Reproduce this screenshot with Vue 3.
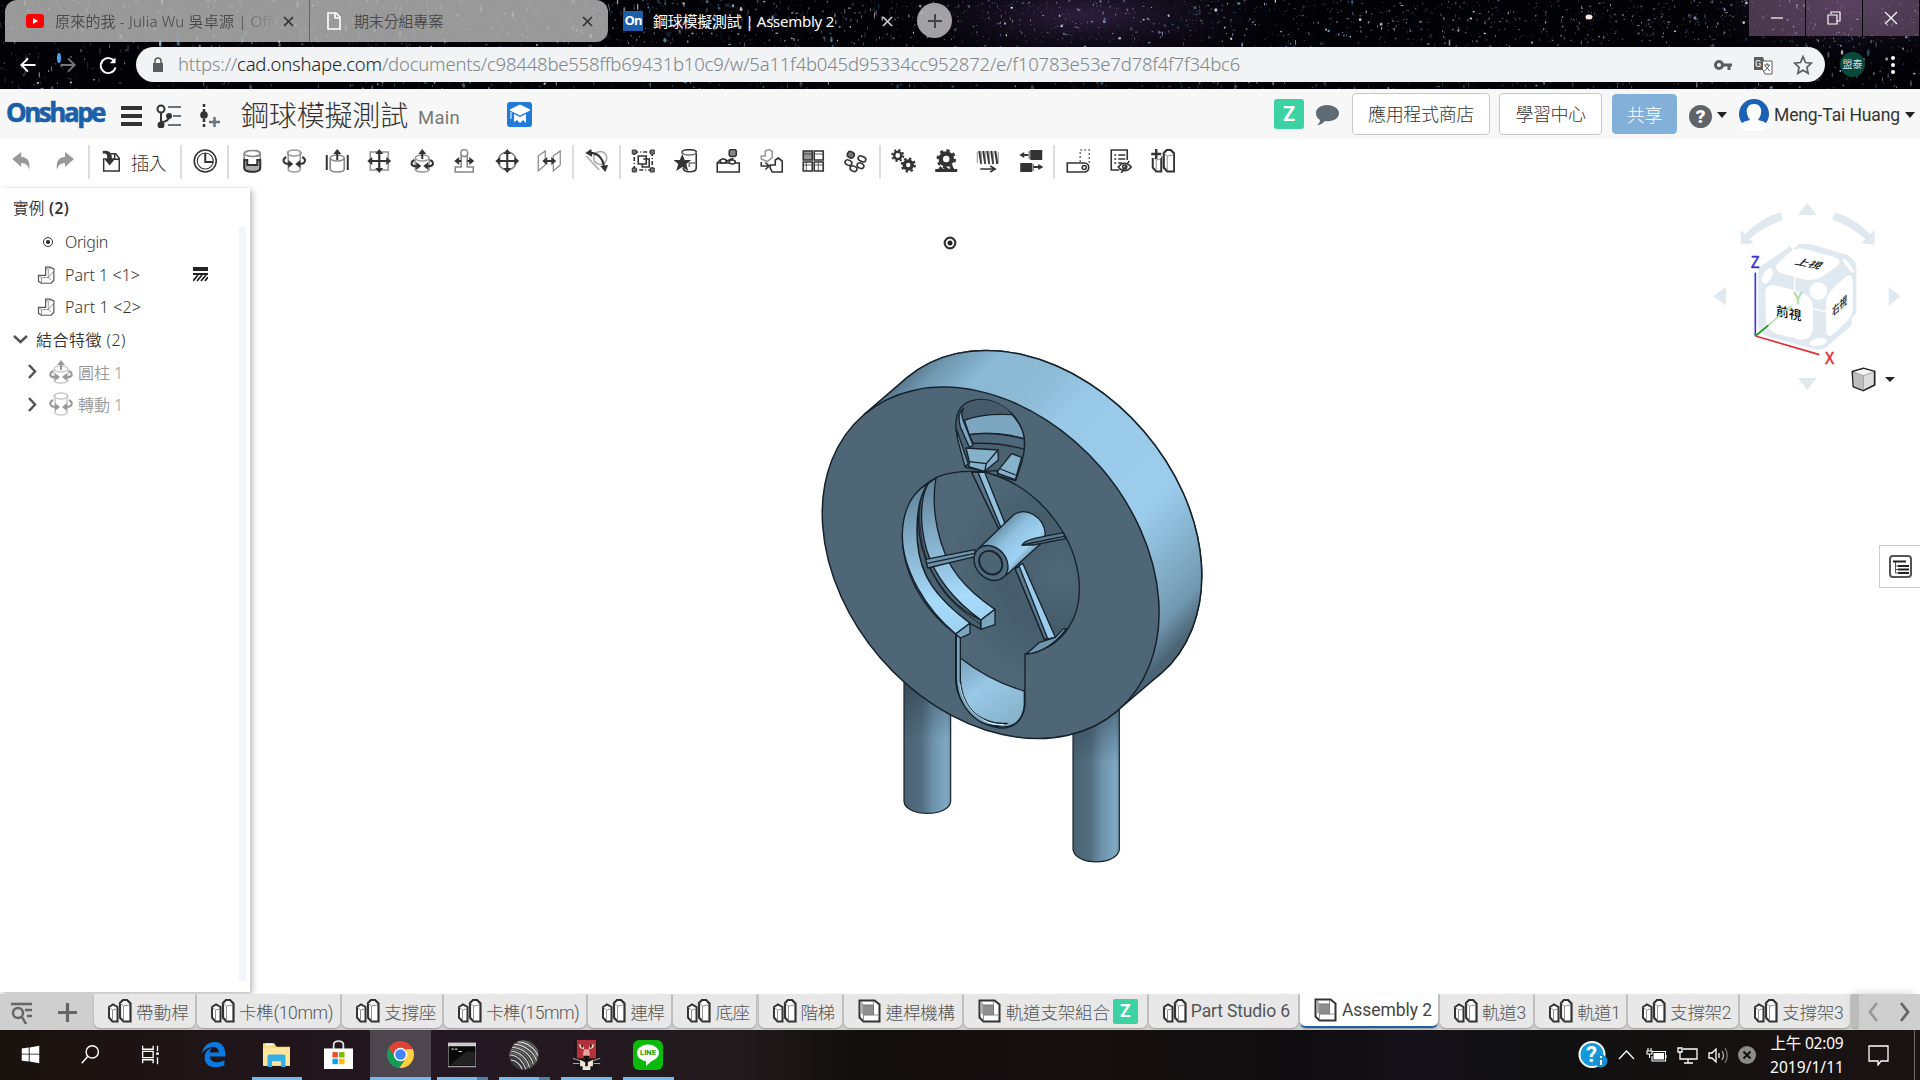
<script setup>
const svg = (name, box = '0 0 24 24') => `<svg viewBox="${box}" width="100%" height="100%" fill="none" stroke="#333" stroke-width="1.6">${shapes[name]}</svg>`

const part = '<path d="M1.500 8l4-2.500 4.500 2.500v14.500H5l-3.500-4z" fill="#fff" stroke-width="2"/><path d="M5 11v11 M1.500 8L5 11l4-1" stroke="#777" stroke-width=".8"/><path d="M12.500 4l3-3h4l3.500 3.500v18h-7l-3.500-4z" fill="#fff" stroke-width="2.200"/><path d="M16 7v15 M12.500 4L16 7l6-1" stroke="#777" stroke-width=".8"/>'
const shapes = {
  undo: '<path d="M3 10l9-7v5c7 0 9 5 8 13-1-5-4-7-8-7v4z" fill="#999" stroke="none"/>',
  redo: '<path d="M21 10l-9-7v5c-7 0-9 5-8 13 1-5 4-7 8-7v4z" fill="#999" stroke="none"/>',
  insert: '<path d="M4 9v14h17V9l-4-5h-5 M16 4v6h5" fill="#fff"/><path d="M3 1c7-1 10 2 10 8h4l-6.500 8L4 9h4c0-4-1-6-5-5z" fill="#333" stroke="none"/>',
  clock: '<circle cx="12" cy="12" r="11"/><circle cx="12" cy="12" r="8" stroke-width="1.1"/><path d="M12 4v9h8" stroke-width="2"/>',
  fastened: '<path d="M4 4v15c0 5 16 5 16 0V4" stroke="#888"/><ellipse cx="12" cy="4.500" rx="8" ry="3" stroke="#888" fill="#fff"/><path d="M4 11v8c0 5 16 5 16 0v-8h-3v5H7v-5z" fill="#aaa" stroke-width="2"/>',
  revolute: '<path d="M6 3v17c0 4 12 4 12 0V3" stroke="#999"/><ellipse cx="12" cy="4" rx="7" ry="3" stroke="#999"/><path d="M4 8c-4 2-4 7 3 7 M20 8c4 2 4 7-3 7" stroke-width="2"/><path d="M6 11l5 4-5 4z M18 11l-5 4 5 4z" fill="#333" stroke="none"/>',
  slider: '<path d="M5 9v11c0 4 14 4 14 0V9" stroke="#888"/><ellipse cx="12" cy="9" rx="7" ry="3" stroke="#888"/><path d="M1.500 6v15 M22.500 6v15" stroke-width="2"/><path d="M12 11V3" stroke-width="2"/><path d="M8 5l4-5 4 5z" fill="#333" stroke="none"/>',
  planar: '<rect x="3" y="3" width="18" height="18" stroke="#999"/><path d="M12 2v20M2 12h20" stroke-width="2.200"/><path d="M8 5l4-5 4 5zM8 19l4 5 4-5zM5 8l-5 4 5 4zM19 8l5 4-5 4z" fill="#333" stroke="none"/>',
  cylindrical: '<path d="M5 9v11c0 4 14 4 14 0V9" stroke="#999"/><ellipse cx="12" cy="9" rx="7" ry="3" stroke="#999"/><path d="M4 11c-4 2-4 7 3 6 M20 11c4 2 4 7-3 6 M12 10V3" stroke-width="2"/><path d="M6 13l5 4-5 4z M18 13l-5 4 5 4zM8 5l4-5 4 5z" fill="#333" stroke="none"/>',
  pinslot: '<circle cx="12" cy="4" r="3.500" stroke="#888"/><path d="M9 6v12H3v5h18v-5h-6V6" stroke="#888"/><path d="M5 12h4 M15 12h4" stroke-width="2"/><path d="M7 8l-5 4 5 4zM17 8l5 4-5 4z" fill="#333" stroke="none"/>',
  ball: '<circle cx="12" cy="12" r="9" stroke="#888"/><path d="M12 3v18M3 12h18" stroke-width="2"/><path d="M8 5l4-5 4 5zM8 19l4 5 4-5zM5 8l-5 4 5 4zM19 8l5 4-5 4z" fill="#333" stroke="none"/>',
  parallel: '<path d="M1 7l7-5v14l-7 6z M16 7l7-5v14l-7 6z" stroke="#888" stroke-width="1.200"/><path d="M7 12h10" stroke-width="2"/><path d="M10 8l-5 4 5 4zM14 8l5 4-5 4z" fill="#333" stroke="none"/>',
  tangent: '<circle cx="16" cy="9" r="6.500" stroke="#aaa"/><path d="M2 7l13 14" stroke="#aaa"/><path d="M4 4c10-1 15 6 16 15" stroke-width="2.200"/><path d="M7 0L1 4l7 4zM16 17l5 6 3-7z" fill="#333" stroke="none"/>',
  group: '<path d="M3 3h18v18H3z" stroke-dasharray="4 2 1 2"/><path d="M1 1h4v4H1zM19 1h4v4h-4zM1 19h4v4H1zM19 19h4v4h-4z" fill="#777" stroke-width="1"/><path d="M7 7h8v8H7zM12 10h6v8h-7v-3" fill="#fff"/>',
  star: '<path d="M8 5v-2c0-3 14-3 14 0v16c0 5-13 5-13 0"/><path d="M8 3c0 4 14 4 14 0M15 18v-4h7" stroke="#777"/><path d="M8 5l2.500 6H17l-5 4 2 7-6-4-6 4 2-7-5-4h6.500z" fill="#333" stroke="none"/>',
  replicate: '<path d="M1 14h22v9H1zM4 14l3-4 4 2 4-2 5 4" fill="#fff"/><path d="M1 14l3-3" /><ellipse cx="7" cy="12" rx="3" ry="2" fill="#fff"/><ellipse cx="16" cy="13" rx="3" ry="2" fill="#fff"/><path d="M13 2c0-2 7-2 7 0v4c0 2-7 2-7 0z" fill="#888"/><path d="M16.500 7v4" stroke-dasharray="1 1"/>',
  copy: '<path d="M2 10V7h4V2l4-1.500 3 2v6l-5 4z" stroke="#999"/><path d="M11 19v-3h5v-5l3-2 4 3v11H13z"/><path d="M2 13v4h7M6 13.500l4 3.500-4 3.500" stroke-width="1.500"/>',
  pattern: '<path d="M2 2h9v9H2z" fill="#999"/><path d="M13 2h9v9h-9zM2 13h9v9H2zM13 13h9v9h-9z"/><path d="M2 5h8M14 5h8M2 16h8M14 16h8M5 13v9M17 13v9" stroke-width=".8"/>',
  circular: '<g fill="#fff"><rect x="3" y="3" width="7" height="6" rx="3" fill="#777" transform="rotate(25 7 6)"/><rect x="14" y="7" width="8" height="5" rx="3" transform="rotate(25 17 9)"/><rect x="1" y="11" width="7" height="5" rx="3" transform="rotate(25 4 13)"/><rect x="13" y="14" width="7" height="5" rx="3" transform="rotate(25 16 16)"/><rect x="6" y="17" width="7" height="5" rx="3" transform="rotate(25 9 19)"/></g>',
  gears: '<circle cx="6.500" cy="6.500" r="3.600" stroke-width="2.400"/><circle cx="6.500" cy="6.500" r="5.500" stroke-width="2" stroke-dasharray="2.100 2.220"/><circle cx="17" cy="16" r="4" stroke-width="3.600"/><circle cx="17" cy="16" r="6.500" stroke-width="2.200" stroke-dasharray="2.400 2.700"/>',
  rack: '<circle cx="12" cy="10" r="5.500" stroke-width="4.500"/><circle cx="12" cy="10" r="8.500" stroke-width="2.500" stroke-dasharray="3.300 3.370"/><path d="M1 23v-3h3l2-3 3 3 3-2 3 2 3-3 2 3h3v3z" fill="#333" stroke="none"/>',
  screw: '<path d="M3 2l2 13M7 2l2 13M11 2l2 13M15 2l2 13M19 2l2 13" stroke-width="2"/><path d="M1 3v11M5 2v13M9 2v13M13 2v13M17 2v13M22 3v11" stroke="#777" stroke-width=".8"/><path d="M4 20h13M14 17l5 3-5 3" stroke-width="1.500"/>',
  linear: '<path d="M11 1h12v10H11zM1 14h12v9H1z" fill="#333" stroke="none"/><path d="M10 2v8M14 15v7" stroke="#888"/><path d="M9 6H3M14 18h7" stroke-width="2"/><path d="M5 3L0 6l5 3zM19 15l5 3-5 3z" fill="#333" stroke="none"/>',
  hole: '<path d="M1 14h17c6 0 6 9 0 9H1z"/><circle cx="18" cy="18.500" r="2"/><path d="M14 13V1h9v14" stroke-dasharray="2 2" stroke="#777"/>',
  hide: '<path d="M19 11V1H3v20h8"/><path d="M6 6h2M10 6h7M6 10h2M10 10h7M6 14h2M10 14h4" stroke-width="1.300"/><path d="M10 18c4-5 9-5 13 0-4 5-9 5-13 0zM21 12l-8 12" stroke-width="1.500"/><circle cx="16.500" cy="18" r="2"/>',
  studioplus: part + '<path d="M0 0h10v9H0z" fill="#fff" stroke="none"/><path d="M5 0v10M0 5h10" stroke-width="2.400"/>',
  part,
  assembly: '<path d="M2 1.500h15l5 4v17H6l-4-4z" fill="#fff" stroke-width="2"/><path d="M6 6h10v10H6z" fill="#8e8e8e" stroke="#777" stroke-width="1"/><path d="M3 3l3 3v10l-3-2z" fill="#aaa" stroke="none"/><path d="M3 2l3 4M16 2v4M16 16l5 0M6 16v6" stroke="#777" stroke-width=".8"/>',
  lpart: '<path d="M2 12.500v8l4 2.500h13l3.500-4V4L17 1.500h-5.500v11z" fill="#fff" stroke="#555"/><path d="M2 12.500l4 3h9l7-8M6 15.500V23M15 15.500V6l-3.500-4M15 6l2-4M15 15.500l4 3.500" stroke="#777" stroke-width="1"/>',
  windows: '<path d="M2 5l8-1v7H2zM11 4l11-2v9H11zM2 12h8v8l-8-1zM11 12h11v10l-11-2z" fill="#fff" stroke="none"/>',
  lens: '<circle cx="14" cy="9" r="7" stroke="#fff"/><path d="M9 14l-7 8" stroke="#fff"/>',
  taskview: '<path d="M3 2v4h12V2M3 22v-4h12v4M3 8.500h12v7H3zM20 2v6M20 15v8" stroke="#fff" stroke-width="1.500"/><circle cx="20" cy="11" r="1.700" fill="#fff" stroke="none"/>',
  edge: '<path d="M1 11C2 4 7 0 13 0c8 0 10.500 6 10.500 14H8.500c0 6 8 7 14 3.500v5C13 26 3.500 24 3.500 15c0-5 3-8 7-9.500-1.500 1.500-2 3.500-2 4.500h8.500C17.500 3 6 3 1 11z" fill="#0a7ae0" stroke="none"/>',
  folder: '<path d="M0 2h10l2 3h12v17H0z" fill="#f8d775" stroke="none"/><path d="M0 6h24v16H0z" fill="#ffe69b" stroke="none"/><path d="M4 23v-9c0-2 1-2 2-2h12c2 0 2 1 2 2v9h-4v-5H8v5z" fill="#35aee8" stroke="none"/><path d="M2 3h7" stroke="#fff"/>',
  store: '<path d="M8 8V4c0-4 8-4 8 0v4" stroke="#ddd" stroke-width="1.500"/><path d="M0 7h24v17H0z" fill="#fff" stroke="none"/><path d="M7 10h4.500v4.500H7z" fill="#f25022" stroke="none"/><path d="M12.500 10H17v4.500h-4.500z" fill="#7fba00" stroke="none"/><path d="M7 15.500h4.500V20H7z" fill="#00a4ef" stroke="none"/><path d="M12.500 15.500H17V20h-4.500z" fill="#ffb900" stroke="none"/>',
  chrome: '<circle cx="12" cy="12" r="12" fill="#db4437" stroke="none"/><path d="M1.600 6A12 12 0 0 0 11 24l6-9-5 3-5-3z" fill="#0f9d58" stroke="none"/><path d="M22.900 7A12 12 0 0 1 11 24l6-9V7z" fill="#ffcd40" stroke="none"/><circle cx="12" cy="12" r="6" fill="#fff" stroke="none"/><circle cx="12" cy="12" r="4.700" fill="#4285f4" stroke="none"/>',
  cmd: '<rect x="0" y="2" width="24" height="20" fill="#090909" stroke="#aaa" stroke-width="1"/><path d="M0 3h24" stroke="#ccc" stroke-width="3"/><path d="M3 7h2M6 7h2M9 9h3" stroke="#ccc" stroke-width="1"/><path d="M1 21l15-12h7v12z" fill="#222" stroke="none"/>',
  sphere: '<circle cx="12" cy="12" r="12" fill="#3a3a3a" stroke="none"/><g stroke="#d8d8d8" stroke-width=".9"><path d="M7 1.500c7 0 14 5 16 11M4 3.500c8 0 16 6 18 13M2.500 6c8 0 15 6 17 13.500M1.500 9c7 0 13 6 15 13M.500 12c6 0 11 5 13 11.500M1.500 16c4 0 8 4 9 7.500"/></g><path d="M10 .500c6 1 11 4 13 9M5.500 2.500c8 0 15 5 17 12M3 5c8 0 16 6 18 13M2 7.500c8 0 14 6 16 13.500M1 10.500c7 0 12 5 14 12" stroke="#888" stroke-width=".7"/>',
  lion: '<path d="M4 0h16v24H4z" fill="#b5303a" stroke="#111" stroke-width="1"/><path d="M4 15h16v9H4z" fill="#161616" stroke="none"/><path d="M6 4l4 1 0 3-3-1zM18 4l-4 1 0 3 3-1z" fill="#efe6c8" stroke="none"/><path d="M8 5.500h1.500M14.500 5.500H16" stroke="#111" stroke-width="2"/><path d="M10 8h4l1 6H9z" fill="#e7a3a0" stroke="none"/><path d="M9 13h6l-3 4z" fill="#111" stroke="none"/><path d="M7 16l4 2v3H7zM17 16l-4 2v3h4zM9 21h6v3H9z" fill="#eee6d8" stroke="none"/><path d="M1.500 15l6 2M22.500 15l-6 2M1.500 19h5M22.500 19h-5" stroke="#bbb" stroke-width=".7"/>',
}

/* Adjusts a label's tracking so that it occupies the given width. */
const vFit = {
  mounted(el, { value }) {
    const w = el.getBoundingClientRect().width
    el.style.letterSpacing = `${(value - w) / el.textContent.length}px`
  },
}

let seed = 97
const rnd = () => ((seed = (seed * 16807) % 2147483647) / 2147483647)
const stars = Array.from({ length: 5200 }, () => {
  const x = rnd() * 1920
  const y = rnd() * 90
  const long = y > 42 || x < 900
  return {
    x, y, rx: 0.4 + rnd() ** 4 * 1.3, ry: (0.4 + rnd() ** 4 * 1.4) * (long ? 2 : 1),
    o: (long ? 0.1 : 0.25) + rnd() ** 2 * 0.75,
    c: ['#fff', '#b9c6ff', '#8fc4e8', '#d5c8ee', '#3d7aa6'][Math.floor(rnd() * 5)],
  }
}).filter((s) => s.y < 42 || rnd() < 0.55)

const SEP = 'sep'
const tools = ['fastened', 'revolute', 'slider', 'planar', 'cylindrical', 'pinslot', 'ball', 'parallel', SEP, 'tangent', SEP,
  'group', 'star', 'replicate', 'copy', 'pattern', 'circular', SEP, 'gears', 'rack', 'screw', 'linear', SEP, 'hole', 'hide', 'studioplus']

const docTabs = [
  { t: '帶動桿', i: 'part', w: 101, f: 53 }, { t: '卡榫(10mm)', i: 'part', w: 143, f: 94 },
  { t: '支撐座', i: 'part', w: 100, f: 52 }, { t: '卡榫(15mm)', i: 'part', w: 142, f: 93 },
  { t: '連桿', i: 'part', w: 83, f: 34 }, { t: '底座', i: 'part', w: 83, f: 34 },
  { t: '階梯', i: 'part', w: 83, f: 34 }, { t: '連桿機構', i: 'assembly', w: 118, f: 69 },
  { t: '軌道支架組合', i: 'assembly', w: 183, f: 104, z: true }, { t: 'Part Studio 6', i: 'part', w: 149, f: 99 },
  { t: 'Assembly 2', i: 'assembly', w: 138, f: 90, on: true }, { t: '軌道3', i: 'part', w: 93, f: 44 },
  { t: '軌道1', i: 'part', w: 91, f: 43 }, { t: '支撐架2', i: 'part', w: 110, f: 61 }, { t: '支撐架3', i: 'part', w: 110, f: 61 },
]
const apps = [
  { i: 'windows', w: 60 }, { i: 'lens', w: 60 }, { i: 'taskview', w: 60 }, { i: 'edge', w: 66, s: 25 },
  { i: 'folder', w: 61, s: 27, run: true }, { i: 'store', w: 63, s: 29 }, { i: 'chrome', w: 61, s: 27, run: true, on: true },
  { i: 'cmd', w: 62, s: 28, run: true, many: true }, { i: 'sphere', w: 62, s: 30, run: true, many: true },
  { i: 'lion', w: 62, s: 31, run: true }, { i: 'line', w: 62, run: true },
]
</script>

<template>
  <div class="screen">
    <header class="chrome">
      <svg class="sky" viewBox="0 0 1920 89" width="1920" height="89">
        <defs>
          <radialGradient id="neb"><stop offset="0" stop-color="#4a3262" stop-opacity=".75" /><stop offset="1" stop-color="#1a1028" stop-opacity="0" /></radialGradient>
        </defs>
        <rect width="1920" height="89" fill="#020206" />
        <ellipse cx="1085" cy="15" rx="200" ry="55" fill="url(#neb)" opacity=".8" />
        <ellipse cx="1850" cy="5" rx="160" ry="60" fill="url(#neb)" opacity=".7" />
        <ellipse v-for="(s, n) in stars" :key="n" :cx="s.x" :cy="s.y" :rx="s.rx" :ry="s.ry" :fill="s.c" :opacity="s.o" />
        <ellipse cx="59" cy="58" rx="2" ry="5" fill="#4da0f0" />
        <ellipse cx="1589" cy="17" rx="3.500" ry="2.500" fill="#ffe8e4" />
      </svg>
      <div class="tabs">
        <div class="tab first">
          <svg width="18" height="14" viewBox="0 0 18 14"><rect width="18" height="14" rx="3" fill="#f00" /><path d="M7 4l5 3-5 3z" fill="#fff" /></svg>
          <span class="ttl fade"><span v-fit="217">原來的我 - Julia Wu 吳卓源 | Off</span></span>
          <svg class="x" width="11" height="11" viewBox="0 0 11 11"><path d="M1 1l9 9M10 1l-9 9" /></svg>
        </div>
        <div class="tab second">
          <svg width="14" height="18" viewBox="0 0 14 18" fill="none" stroke="#fff" stroke-width="1.600"><path d="M1 1h8l4 4v12H1zM8 1v5h5" /></svg>
          <span class="ttl"><span v-fit="89">期末分組專案</span></span>
          <svg class="x" width="11" height="11" viewBox="0 0 11 11"><path d="M1 1l9 9M10 1l-9 9" /></svg>
        </div>
        <div class="tab current">
          <span class="fav">On</span>
          <span class="ttl"><span v-fit="181">鋼球模擬測試 | Assembly 2</span></span>
          <svg class="x" width="11" height="11" viewBox="0 0 11 11"><path d="M1 1l9 9M10 1l-9 9" /></svg>
        </div>
        <div class="newtab"><svg width="16" height="16" viewBox="0 0 16 16"><path d="M8 1v14M1 8h14" stroke="#444" stroke-width="2" /></svg></div>
        <div class="win">
          <i><svg width="14" height="14" viewBox="0 0 14 14"><path d="M1 7h12" /></svg></i>
          <i><svg width="14" height="14" viewBox="0 0 14 14"><path d="M1 4h9v9H1zM4 3V1h9v9h-3" /></svg></i>
          <i><svg width="14" height="14" viewBox="0 0 14 14"><path d="M1 1l12 12M13 1L1 13" /></svg></i>
        </div>
      </div>
      <div class="nav">
        <svg class="nb" viewBox="0 0 24 24" stroke="#fff"><path d="M21 12H4M12 4l-8 8 8 8" /></svg>
        <svg class="nb" viewBox="0 0 24 24" stroke="#777"><path d="M3 12h17M12 4l8 8-8 8" /></svg>
        <svg class="nb" viewBox="0 0 24 24" stroke="#fff"><path d="M20 8a9 9 0 1 0 1 7" /><path d="M21 3v7h-7z" fill="#fff" stroke="none" /></svg>
        <div class="omni">
          <svg width="12" height="16" viewBox="0 0 12 16"><path d="M1 6h10v9H1z" fill="#5a5d61" /><path d="M3 7V4c0-4 6-4 6 0v3" fill="none" stroke="#5a5d61" stroke-width="1.500" /></svg>
          <span class="url"><span v-fit="1062">https://<b>cad.onshape.com</b>/documents/c98448be558ffb69431b10c9/w/5a11f4b045d95334cc952872/e/f10783e53e7d78f4f7f34bc6</span></span>
          <svg width="20" height="20" viewBox="0 0 20 20" fill="none" stroke="#5a5d61"><circle cx="6" cy="10" r="3.500" stroke-width="3" /><path d="M9 10h10M16 10v5" stroke-width="3" /></svg>
          <svg width="20" height="20" viewBox="0 0 20 20"><path d="M1 2h9l4 13H1z" fill="#5a5d61" /><path d="M10 6h9v13h-7l-2-4" fill="#fff" stroke="#5a5d61" /><text x="2" y="12" font-size="9" font-family="Roboto" fill="#fff">G</text><path d="M11 10h6M14 8v2M16 10c-1 3-3 5-5 6M12 11l5 5" fill="none" stroke="#5a5d61" /></svg>
          <svg width="20" height="20" viewBox="0 0 24 24" fill="none" stroke="#5a5d61" stroke-width="2"><path d="M12 2l3 7 7 .8-5.300 5 1.500 7.200-6.200-3.800L5.800 22l1.500-7.200L2 9.800 9 9z" /></svg>
        </div>
        <div class="me">盟泰</div>
        <svg class="dots" width="6" height="18" viewBox="0 0 6 18" fill="#fff"><circle cx="3" cy="2" r="2" /><circle cx="3" cy="9" r="2" /><circle cx="3" cy="16" r="2" /></svg>
      </div>
    </header>

    <div class="head">
      <span class="logo"><span v-fit="98">Onshape</span></span>
      <svg class="h1" width="21" height="20" viewBox="0 0 21 20" fill="#333"><path d="M0 0h21v4H0zM0 8h21v4H0zM0 16h21v4H0z" /></svg>
      <svg class="h2" width="26" height="24" viewBox="0 0 26 24" fill="none" stroke="#333" stroke-width="2"><circle cx="5" cy="5" r="3.500" /><path d="M5 9v11M5 18c6 0 8-3 8-6" /><circle cx="5" cy="21" r="2.500" fill="#333" /><circle cx="13" cy="12" r="2" fill="#333" /><path d="M12 3h13M17 12h8M12 21h13" stroke="#68757f" /></svg>
      <svg class="h3" width="22" height="24" viewBox="0 0 22 24" fill="none" stroke="#333" stroke-width="2.500"><path d="M5 0v24" stroke-dasharray="3 2" /><circle cx="5" cy="11" r="3.800" fill="#333" stroke="none" /><path d="M10 18h11M15.500 13v10" stroke="#68757f" /></svg>
      <span class="doc"><span v-fit="167">鋼球模擬測試</span></span>
      <span class="main"><span v-fit="42">Main</span></span>
      <svg class="edu" width="25" height="25" viewBox="0 0 25 25"><rect width="25" height="25" rx="3" fill="#237bd9" /><path d="M3 8l10-5 10 5-10 5zM4 10v7" fill="#fff" stroke="#fff" /><path d="M7 12l6 3 6-3v9l-3-3-3 3-3-3-3 2z" fill="#fff" /></svg>
      <span class="z">Z</span>
      <svg class="chat" width="26" height="22" viewBox="0 0 26 22"><path d="M13 1C6 1 2 5 2 9c0 3 1 5 4 7 0 2-1 4-3 5 4 0 6-2 8-4 9 1 14-3 14-8 0-4-5-8-12-8z" fill="#606a73" /></svg>
      <span class="btn" style="--w: 138px"><span v-fit="106">應用程式商店</span></span>
      <span class="btn" style="--w: 103px"><span v-fit="70">學習中心</span></span>
      <span class="btn share" style="--w: 65px"><span v-fit="35">共享</span></span>
      <span class="help">?</span><i class="caret" />
      <svg class="ava" width="32" height="32" viewBox="0 0 32 32"><circle cx="16" cy="15" r="15" fill="#1b62b5" /><path d="M16 5c-6 0-8 5-7 9 0 3 2 5 3 7-5 1-10 3-10 7l5 4h18l5-4c0-4-5-6-10-7 1-2 3-4 3-7 1-4-1-9-7-9z" fill="#fff" /></svg>
      <span class="who"><span v-fit="126">Meng-Tai Huang</span></span><i class="caret" />
    </div>

    <div class="tools">
      <i class="t first" v-html="svg('undo')" />
      <i class="t" v-html="svg('redo')" />
      <i class="sep" />
      <i class="t ins" v-html="svg('insert')" /><span class="instxt"><span v-fit="35">插入</span></span>
      <i class="sep" />
      <i class="t ck" v-html="svg('clock')" />
      <i class="sep" />
      <template v-for="(n, k) in tools" :key="k">
        <i v-if="n === 'sep'" class="sep" />
        <i v-else class="t" v-html="svg(n)" />
      </template>
    </div>

    <main class="work">
      <aside class="panel">
        <div class="row ttlrow"><span v-fit="56">實例 <b>(2)</b></span></div>
        <div class="tree">
          <div class="row"><svg class="org" width="12" height="12" viewBox="0 0 12 12"><circle cx="6" cy="6" r="4.500" fill="none" stroke="#333" /><circle cx="6" cy="6" r="2" fill="#222" /></svg><span v-fit="43">Origin</span></div>
          <div class="row"><i class="pi" v-html="svg('lpart')" /><span v-fit="75">Part 1 &lt;1&gt;</span>
            <svg class="fix" width="15" height="15" viewBox="0 0 15 15"><path d="M0 0h15v4H0z" fill="#222" /><path d="M0 7h15M0 14l5-6M4 14l5-6M8 14l5-6M12 14l3-4" stroke="#222" stroke-width="1.800" /></svg></div>
          <div class="row"><i class="pi" v-html="svg('lpart')" /><span v-fit="76">Part 1 &lt;2&gt;</span></div>
          <div class="row"><svg class="dn" width="15" height="9" viewBox="0 0 15 9"><path d="M1 1l6.500 6L14 1" fill="none" stroke="#555" stroke-width="2.500" /></svg><span v-fit="90">結合特徵 (2)</span></div>
          <div class="row dim"><svg class="rt" width="9" height="15" viewBox="0 0 9 15"><path d="M1 1l6 6.500L1 14" fill="none" stroke="#555" stroke-width="2.500" /></svg><i class="fi" v-html="svg('cylindrical')" /><span v-fit="45">圓柱 1</span></div>
          <div class="row dim"><svg class="rt" width="9" height="15" viewBox="0 0 9 15"><path d="M1 1l6 6.500L1 14" fill="none" stroke="#555" stroke-width="2.500" /></svg><i class="fi" v-html="svg('revolute')" /><span v-fit="45">轉動 1</span></div>
        </div>
      </aside>

      <section class="canvas">
        <svg class="origin" width="14" height="14" viewBox="0 0 14 14"><circle cx="7" cy="7" r="5.300" fill="#fff" stroke="#333" stroke-width="2.200" /><circle cx="7" cy="7" r="2.500" fill="#222" /></svg>

        <svg class="model" width="420" height="550" viewBox="0 0 1260 1650" fill="none" stroke="#16212a" stroke-width="4.500" stroke-linejoin="round">
          <defs>
            <linearGradient id="rim" gradientUnits="userSpaceOnUse" x1="250" y1="200" x2="1080" y2="1000">
              <stop offset="0" stop-color="#557387" /><stop offset=".05" stop-color="#6f97b0" /><stop offset=".14" stop-color="#8ab8d5" /><stop offset=".27" stop-color="#8dbad4" />
              <stop offset=".38" stop-color="#99c9e9" /><stop offset=".7" stop-color="#9bccec" /><stop offset=".83" stop-color="#85b0cb" /><stop offset=".93" stop-color="#7299b2" /><stop offset="1" stop-color="#4c6575" />
            </linearGradient>
            <linearGradient id="leg"><stop offset="0" stop-color="#4a6272" /><stop offset=".38" stop-color="#536e80" /><stop offset=".62" stop-color="#6d92ab" /><stop offset=".92" stop-color="#7fa9c3" /><stop offset="1" stop-color="#6d92ab" /></linearGradient>
            <linearGradient id="shade" x1="0" x2="0" y1="0" y2="1"><stop offset="0" stop-color="#1e2d38" stop-opacity=".5" /><stop offset="1" stop-color="#1e2d38" stop-opacity="0" /></linearGradient>
            <linearGradient id="hub" gradientUnits="userSpaceOnUse" x1="255" y1="430" x2="365" y2="540"><stop offset="0" stop-color="#5d7f95" /><stop offset=".4" stop-color="#90c2e0" /><stop offset=".75" stop-color="#a0d3f3" /><stop offset="1" stop-color="#5f8299" /></linearGradient>
            <linearGradient id="band" gradientUnits="userSpaceOnUse" x1="60" y1="280" x2="160" y2="720"><stop offset="0" stop-color="#5f8196" /><stop offset=".35" stop-color="#82acc7" /><stop offset=".8" stop-color="#a8dbfb" /><stop offset="1" stop-color="#9fd2f1" /></linearGradient>
            <linearGradient id="slot" gradientUnits="userSpaceOnUse" x1="200" y1="820" x2="320" y2="1000"><stop offset="0" stop-color="#7fa9c3" /><stop offset=".4" stop-color="#98c9e7" /><stop offset="1" stop-color="#88b3cc" /></linearGradient>
            <radialGradient id="bore" gradientUnits="userSpaceOnUse" cx="480" cy="550" r="330"><stop offset="0" stop-color="#506979" /><stop offset=".5" stop-color="#465c6a" /><stop offset="1" stop-color="#4f6777" /></radialGradient>
          </defs>
          <path d="M312 1020V1415C318 1462 446 1462 452 1415V1020z" fill="url(#leg)" stroke-width="3.500" />
          <path d="M819 1100V1558C825 1608 952 1608 958 1558V1100z" fill="url(#leg)" stroke-width="3.500" />
          <path d="M313 1030h138v200H313z" fill="url(#shade)" stroke="none" />
          <path d="M820 1120h137v180H820z" fill="url(#shade)" stroke="none" />
          <ellipse cx="700" cy="588.500" rx="585" ry="437" transform="rotate(49.300 700 588.500)" fill="url(#rimr)" />
          <clipPath id="hull"><ellipse cx="700" cy="588.500" rx="585" ry="437" transform="rotate(49.300 700 588.500)" /><path d="M191 254.500L319 144.500L1081 1031.500L953 1141.500z" /></clipPath>
          <rect width="1260" height="1260" fill="url(#rim)" stroke="none" clip-path="url(#hull)" />
          <ellipse cx="700" cy="588.500" rx="585" ry="437" transform="rotate(49.300 700 588.500)" stroke-dasharray="1615 1615" stroke-dashoffset="1615" />
          <path d="M191 254.500L319 144.500M1081 1031.500L953 1141.500" />
          <ellipse cx="572" cy="698.500" rx="585" ry="437" transform="rotate(49.300 572 698.500)" fill="#4e6676" />

          <g transform="translate(300 180)" stroke-width="4">
            <path d="M167 732A307 229 49.300 0 1 110 262C150 245 205 242 256 246L292 258A307 229 49.300 0 1 375 792V945C365 1045 240 1035 180 925C170 900 167 880 167 870z" fill="url(#bore)" />
            <path d="M180 803C240 850 310 885 373 903V945C365 1045 240 1025 190 925L180 870z" fill="url(#slot)" />
            <path d="M169 870V735L181 742V870C188 960 250 1005 320 1000C250 1030 175 960 169 870z" fill="#7ba4bd" />
            <path d="M181 880C190 960 260 1010 312 1003" stroke="#cbeeff" stroke-width="5" />
            <path d="M181 870C188 960 250 1007 325 1000" stroke-width="3" />

            <path d="M108 264C92 350 112 480 175 560C215 610 250 635 285 658L243 690C160 630 105 560 80 480C60 410 58 330 84 281z" fill="url(#band)" />
            <path d="M84 281C45 330 45 450 90 535C130 610 175 660 243 690V718L210 700C110 625 60 560 52 455C48 390 55 310 84 281z" fill="#48606f" />
            <path d="M84 281C40 305 10 355 7 430C5 540 80 660 167 732L210 700C110 625 60 560 52 455C48 390 55 320 84 281z" fill="url(#band)" />
            <path d="M62 330C50 430 75 530 135 610C165 650 210 680 243 704" stroke-width="2.500" />
            <path d="M167 732L210 700V731L181 744zM243 690L285 658V704L243 718z" fill="#7ca5bf" />

            <path d="M77 508L225 479V500L83 534z" fill="#6c93ab" /><path d="M78 521L225 490" />
            <path d="M215 247H254L317 405L300 424z" fill="#92c1de" /><path d="M215 247L300 424L302 412L234 247z" fill="#577488" />
            <path d="M345 535L368 520L466 742L433 748z" fill="#9bcced" /><path d="M345 535L433 748L443 746L358 530z" fill="#5a788c" />
            <path d="M379 792L419 757L466 742L490 716H499C470 760 420 790 379 792z" fill="#6f97b0" />

            <path d="M235 476L341 374C380 350 430 380 436 430C437 445 425 462 410 472L320 554z" fill="url(#hub)" />
            <ellipse cx="273" cy="519" rx="57" ry="46" transform="rotate(49 273 519)" fill="#506b7c" />
            <ellipse cx="272" cy="518" rx="38" ry="32" transform="rotate(49 272 518)" fill="#4d6473" stroke-width="5.500" />
            <path d="M366 465C375 450 390 447 490 428L497 446L400 465z" fill="#5d7b8f" /><path d="M366 465L492 439" />

            <path d="M168 120C163 60 190 30 240 28C310 28 372 90 374 160C374 180 370 200 366 215L347 272L294 258L292 242L254 244L197 232z" fill="#4a6170" />
            <path d="M180 67C190 48 210 35 240 29C280 29 315 45 336 74C280 70 235 77 193 91z" fill="#465b69" stroke="none" />
            <path d="M193 91C235 75 280 71 336 74C360 100 370 120 373 147C320 130 260 127 208 134z" fill="#7da6c0" />
            <path d="M208 134C260 127 320 132 373 147V178C325 164 275 158 219 160z" fill="#4f6879" />
            <path d="M190 55C175 68 175 90 181 110L208 172L219 165L190 92C184 78 183 68 190 55z" fill="#7ca6bf" />
            <path d="M169 117L205 221L195 230L172 145z" fill="#6b91a9" />
            <path d="M198 174L294 180L295 210L254 244L206 230L208 214z" fill="#86b1cb" /><path d="M294 180L259 221L254 244M259 221L208 215" />
            <path d="M335 191L365 202L346 269L294 250V242z" fill="#87b2cc" /><path d="M301 237L347 255" />
          </g>
        </svg>

        <div class="cube">
          <svg width="230" height="230" viewBox="0 0 690 690" fill="none">
            <g fill="#e1e9f0"><path d="M352 68l28 37h-56zM352 630l28-36h-56zM70 349l38-28v56zM632 349l-36-28v56z" />
              <path d="M272 97l6 24C240 133 205 153 179 178l13 12-40 4V150l13 13C193 133 230 110 272 97z" /><path d="M434 97l-6 24C466 133 500 153 526 178l-13 12 41 4V150l-13 13C512 133 476 110 434 97z" />
              <path d="M205 265L300 198L308 210L325 193Q345 188 380 197L470 224Q500 238 499 265V400L486 412L484 437L410 501Q395 512 375 508L235 470Q200 455 203 420z" /></g>
            <path d="M308 208l15 8M314 280v55M368 385l45 12M460 237l30 40" stroke="#fff" stroke-width="4" />
            <g fill="#fff"><path d="M305 212Q325 202 350 208L435 232Q458 242 442 258L400 288Q375 303 345 299L275 280Q248 268 265 248z" />
              <path d="M226 345Q224 313 252 315L335 337Q370 350 369 390V445Q365 482 330 479L260 461Q230 448 228 425z" />
              <path d="M408 370Q408 350 425 330L465 292Q485 278 488 300V390Q485 410 465 430L430 463Q410 477 408 450z" />
              <ellipse cx="385" cy="333" rx="26" ry="27" /><ellipse cx="232" cy="288" rx="13" ry="25" transform="rotate(28 232 288)" /><ellipse cx="385" cy="486" rx="27" ry="11" transform="rotate(-12 385 486)" /><ellipse cx="474" cy="256" rx="6" ry="25" transform="rotate(-38 474 256)" /></g>
            <g class="ct" fill="#111"><text transform="matrix(.96 .2 -.55 .6 312 252)" font-size="39">上視</text><text transform="matrix(.98 .2 0 1 258 406)" font-size="39">前視</text><text transform="matrix(.65 -.57 0 1 426 410)" font-size="35">右視</text></g>
            <path d="M196 278V468" stroke="#3a35d4" stroke-width="5" /><path d="M196 468L388 524" stroke="#df3038" stroke-width="5" />
            <path d="M196 468L305 377" stroke="#a6dca6" stroke-width="4" /><path d="M196 468L235 436" stroke="#19a019" stroke-width="5" />
            <g class="ax" font-size="52" stroke-width="2"><text x="183" y="264" fill="#3a35d4" stroke="#3a35d4">Z</text><text x="405" y="552" fill="#df3038" stroke="#df3038">X</text><text x="310" y="373" fill="#a6dca6" stroke="#a6dca6">Y</text></g>
            <path d="M487 575L520 565L554 574V615L520 632L490 620z" fill="#dcdcdc" stroke="#222" stroke-width="5" /><path d="M490 576l30 11v43l-29-12z" fill="#bdbdbd" /><path d="M492 575l29-8 30 8-30 11z" fill="#f4f4f4" />
            <path d="M520 587v43M520 587l32-11M520 587l-31-11" stroke="#888" stroke-width="2" /><path d="M585 591h30l-15 15z" fill="#222" />
          </svg>
        </div>
        <div class="side"><svg width="23" height="23" viewBox="0 0 23 23"><rect x="1" y="1" width="21" height="21" rx="3" fill="#fff" stroke="#555" stroke-width="2" /><path d="M4 6.500h13M9 11h11M9 14.500h11M9 18h11" fill="none" stroke="#222" stroke-width="2.200" /><path d="M6.500 7v11h3M6.500 11h3M6.500 14.500h3" fill="none" stroke="#555" stroke-width="1" /></svg></div>
      </section>
    </main>

    <div class="doctabs">
      <svg class="find" width="22" height="24" viewBox="0 0 22 24" fill="none" stroke="#666" stroke-width="2.500"><path d="M0 2h21M14 8h7M16 14h5" /><circle cx="7" cy="11" r="5" /><path d="M11 15l4 7" /></svg>
      <svg class="add" width="19" height="19" viewBox="0 0 18 18"><path d="M9 0v18M0 9h18" stroke="#666" stroke-width="3" /></svg>
      <div v-for="d in docTabs" :key="d.t" class="dt" :class="{ active: d.on }" :style="{ width: d.w + 'px' }">
        <i class="di" v-html="svg(d.i)" /><span v-fit="d.f">{{ d.t }}</span><b v-if="d.z">Z</b>
      </div>
      <div class="dt stub" />
      <div class="arrows">
        <svg width="11" height="20" viewBox="0 0 11 20"><path d="M9 1L2 10l7 9" fill="none" stroke="#999" stroke-width="2.800" /></svg>
        <svg width="11" height="20" viewBox="0 0 11 20"><path d="M2 1l7 9-7 9" fill="none" stroke="#666" stroke-width="2.800" /></svg>
      </div>
    </div>

    <footer class="bar">
      <div v-for="a in apps" :key="a.i" class="app" :class="{ run: a.run, front: a.on, many: a.many }" :style="{ width: a.w + 'px' }">
        <span v-if="a.i === 'line'" class="line"><svg width="24" height="22" viewBox="0 0 24 22"><ellipse cx="12" cy="9" rx="11" ry="8.500" fill="#fff" /><path d="M10 16v6l8-7z" fill="#fff" /></svg><em>LINE</em></span>
        <i v-else :style="{ width: (a.s || 21) + 'px', height: (a.s || 21) + 'px' }" v-html="svg(a.i)" />
      </div>
      <div class="tray">
        <svg class="y1" width="30" height="28" viewBox="0 0 30 28"><circle cx="14" cy="13.500" r="13.500" fill="#fff" /><circle cx="14" cy="13.500" r="11.500" fill="#1499dc" /><text x="8" y="21" font-size="22" font-weight="700" font-family="Roboto" fill="#fff">?</text><circle cx="23" cy="20" r="6.500" fill="#1a8fd0" /><path d="M23 15v2M23 19v5" stroke="#fff" stroke-width="2" /></svg>
        <svg class="y2" width="17" height="10" viewBox="0 0 17 10"><path d="M1 9l7.500-8L16 9" /></svg>
        <svg class="y3" width="21" height="15" viewBox="0 0 21 15"><path d="M7.500 5h10.500v6.500H7.500z" fill="#fff" stroke="none" /><path d="M6 3.500h13.500v9.500H6V8M20 7v3M1 3h5v3H1zM2 0v3M5 0v3M3.500 6v4" stroke-width="1.100" /></svg>
        <svg class="y4" width="21" height="17" viewBox="0 0 21 17"><path d="M6 2h14v10H3V8M11 12v4M7 16h9M1 1h4v4H1zM3 5v5" /></svg>
        <svg class="y5" width="21" height="17" viewBox="0 0 21 17"><path d="M1 6h3l4-4v13l-4-4H1z" /><path d="M11 6v5" /><path d="M14 4c2 3 2 6 0 9" stroke="#aaa" /><path d="M17 1c3 5 3 10 0 15" stroke="#777" /></svg>
        <svg class="y6" width="18" height="18" viewBox="0 0 18 18"><circle cx="9" cy="9" r="9" fill="#8b8b8b" stroke="none" /><path d="M5.500 5.500l7 7M12.500 5.500l-7 7" stroke="#111" stroke-width="2" /></svg>
        <div class="time"><span v-fit="73">上午 02:09</span><span v-fit="74">2019/1/11</span></div>
        <svg class="y7" width="21" height="21" viewBox="0 0 21 21"><path d="M1 1h19v15h-7l-3 4v-4H1z" /></svg>
        <i class="edgeline" />
      </div>
    </footer>
  </div>
</template>

<style>
html, body { margin: 0; overflow: hidden; }
</style>

<style scoped>
.screen { width: 1920px; height: 1080px; display: flex; flex-direction: column; overflow: hidden; background: #fff; color: #333; font-family: Roboto, "Noto Sans CJK TC", sans-serif; font-weight: 300; }
.screen * { box-sizing: border-box; }
span { white-space: nowrap; display: inline-block; }
svg { display: block; flex: none; }
i { flex: none; font-style: normal; display: block; }

.chrome { height: 89px; position: relative; background: #000; font-family: "Noto Sans", "Noto Sans CJK TC", sans-serif; font-weight: 400; }
.sky { position: absolute; inset: 0; }
.tabs { position: relative; height: 42px; display: flex; }
.tab { height: 42px; display: flex; align-items: center; background: rgba(178, 178, 178, .86); color: #484848; font-size: 15px; }
.tab .x { margin-left: auto; margin-right: 15px; stroke: #333; stroke-width: 1.700; }
.first.tab { width: 305px; margin-left: 5px; padding-left: 21px; border-top-left-radius: 12px; border-right: 1px solid #666; }
.second { width: 298px; padding-left: 17px; border-radius: 0 12px 12px 0; }
.ttl { margin-left: 11px; padding-bottom: 2px; font-weight: 400; }
.second .ttl { margin-left: 13px; }
.first .ttl { width: 220px; }
.second .ttl, .first .ttl { font-weight: 350; }
.fade { mask-image: linear-gradient(90deg, #000 85%, transparent); }
.tab.current { width: 300px; background: none; padding-left: 15px; color: #fff; }
.current .ttl { margin-left: 10px; }
.tab.current .x { stroke: #ccc; }
.fav { width: 20px; height: 20px; background: #1b5faa; color: #fff; text-align: center; letter-spacing: -1px; font: 700 13px/19px "Open Sans", sans-serif; }
.newtab { width: 35px; height: 35px; margin: 3px 0 0 9px; border-radius: 50%; background: rgba(178, 178, 182, .9); display: flex; align-items: center; justify-content: center; }
.win { margin-left: auto; display: flex; height: 36px; }
.win i { width: 57px; border-right: 1px solid #08080c; background: rgba(140, 105, 140, .5); display: flex; align-items: center; justify-content: center; }
.win svg { fill: none; stroke: #fff; stroke-width: 1.200; }
.nav { position: relative; height: 47px; display: flex; align-items: flex-start; padding-left: 18px; }
.nb { width: 20px; height: 20px; margin: 13px 20px 0 0; fill: none; stroke-width: 2.300; }
.omni { width: 1689px; height: 35px; margin: 5px 0 0 -2px; border-radius: 18px; background: #f1f3f4; display: flex; align-items: center; padding-left: 16px; }
.url { width: 1248px; margin-left: 14px; margin-right: 287px; font-size: 18.500px; color: #80868b; font-weight: 350; line-height: 30px; padding-bottom: 2px; }
.url b { font-weight: 350; color: #202124; }
.omni svg + svg { margin-left: 20px; }
.me { width: 25px; height: 25px; margin: 10px 0 0 15px; border-radius: 50%; background: #064a3c; color: #dde; font-size: 10px; line-height: 25px; text-align: center; font-weight: 400; }
.dots { margin: 14px 0 0 25px; }

.head { height: 50px; background: #f7f7f7; display: flex; align-items: center; padding-left: 6px; }
.logo { width: 115px; font: 700 26px/40px "Open Sans", sans-serif; color: #1b5faa; margin-top: -5px; -webkit-text-stroke: .6px #1b5faa; }
.h2 { margin-left: 14px; }
.h3 { margin-left: 17px; }
.h1, .h2, .h3 { margin-top: 4px; }
.doc { width: 167px; margin-left: 20px; font-size: 28px; line-height: 40px; padding-top: 5px; }
.main { margin-left: 10px; font-size: 18.500px; color: #777; width: 89px; padding-top: 7px; font-weight: 400; }
.z { width: 30px; height: 30px; margin-left: 742px; background: #3dd2a4; border-radius: 3px; color: #fff; text-align: center; font-size: 20px; line-height: 31px; font-weight: 700; }
.chat { margin: 2px 12px 0 10px; }
.btn { width: var(--w); height: 42px; margin-right: 9px; border: 1.500px solid #c8c8c8; border-radius: 4px; background: #fff; font-size: 18px; line-height: 42px; text-align: center; }
.btn + .btn { margin-right: 10px; }
.btn.share { height: 40px; background: #83b0d9; border-color: #83b0d9; color: #fff; line-height: 41px; margin-right: 12px; }
.help { width: 23px; height: 23px; margin-top: 4px; border-radius: 50%; background: #606468; color: #fff; font-size: 19px; line-height: 23px; text-align: center; font-weight: 900; }
.caret { border: 5px solid transparent; border-top: 6px solid #222; border-bottom: 0; margin-left: 5px; margin-top: 2px; }
.ava { margin: 1px 4px 0 11px; }
.who { font-size: 17.500px; width: 126px; font-weight: 400; padding-top: 2px; }

.tools { height: 45px; display: flex; align-items: center; font-size: 18px; }
.t { width: 42.500px; height: 24px; padding: 0 9px; margin-top: -1px; }
.t.first { margin-left: 0; }
.t.first + .t { width: 44px; }
.sep { width: 2px; height: 34px; background: #ddd; margin: 0 1.300px; }
.t.ins { width: 40px; }
.instxt { width: 48px; }
.t.ck { width: 42.500px; }

.work { height: 810px; display: flex; }
.panel { width: 250px; height: 804px; margin-top: 4px; background: #fff; box-shadow: 2px 2px 6px rgba(0, 0, 0, .3); font: 400 16px "Noto Sans", "Noto Sans CJK TC", sans-serif; }
.panel .row { height: 32.400px; display: flex; align-items: center; }
.panel .row.ttlrow { padding: 0 0 0 13px; height: 38px; font-size: 15.500px; font-weight: 350; }
.ttlrow b { font-weight: 600; }
.tree { margin-right: 4px; height: 755px; border-right: 7px solid #f2f6fa; font-weight: 350; }
.org { margin: 0 11px 0 42px; }
.pi { width: 18px; height: 18px; margin: 0 10px 0 37px; }
.fix { margin-left: 53px; }
.dn { margin: 0 8px 0 13px; }
.rt { margin: 0 12px 0 28px; }
.fi { width: 24px; height: 24px; margin-right: 5px; opacity: .5; }
.dim { color: #999; }
.canvas { position: relative; flex: 1; }
.origin { position: absolute; left: 693px; top: 52px; }
.model { position: absolute; left: 550px; top: 146px; }
.cube { position: absolute; left: 1440px; top: -4px; }
.ct { font-family: "Noto Sans CJK TC", sans-serif; font-weight: 500; }
.ax { font-family: "Liberation Sans", sans-serif; }
.ax text { transform-box: fill-box; transform: scaleX(.8); }
.side { position: absolute; right: 0; top: 361px; width: 41px; height: 43px; border: 1px solid #ccc; border-right: 0; background: #fff; display: flex; align-items: center; padding-left: 9px; }

.doctabs { height: 36px; background: #cfcfcf; display: flex; align-items: flex-start; padding-left: 11px; font-size: 17.500px; color: #666; }
.find { margin: 8px 0 0; }
.add { margin: 9px 17px 0 25px; }
.dt { height: 34px; margin-right: 2.100px; flex: none; background: #e8e8e8; border-radius: 0 0 6px 6px; box-shadow: 0 1px 2px #999; display: flex; align-items: center; padding-left: 13px; }
.dt.active { background: #fff; border-bottom: 2px solid #1b5faa; }
.dt span { color: #555; }
.dt:nth-of-type(10) span, .dt.active span { font-weight: 400; }
.dt.active span { color: #444; }
.di { width: 25px; height: 24px; margin-right: 4px; }
.dt b { width: 25px; height: 25px; margin-left: 3px; border-radius: 2px; background: #3dd2a4; color: #fff; text-align: center; line-height: 25px; font-weight: 700; }
.dt.stub { width: 7px; padding: 0; margin: 0; background: #bbb; }
.arrows { flex: 1; height: 36px; display: flex; align-items: center; gap: 20px; padding-left: 9px; background: #cfcfcf; box-shadow: -6px 0 8px rgba(190, 190, 190, .7); }

.bar { height: 50px; display: flex; background: linear-gradient(90deg, #1a120d 0, #241722 22%, #221a1d 38%, #120e0d 45%, #170f0f 56%, #0f0d0f 68%, #15121a 74%, #101010 80%, #1c1313 100%); }
.app { height: 50px; display: flex; align-items: center; justify-content: center; position: relative; padding-bottom: 1px; }
.app.front { background: #4d464f; }
.run::after { content: ""; position: absolute; left: 6px; right: 5px; bottom: 0; height: 3px; background: #76b9ed; }
.run.front::after { left: 0; right: 0; }
.run.many::after { background: linear-gradient(90deg, #76b9ed 79%, #5280a5 79%); }
.line { position: relative; width: 30px; height: 30px; padding: 4px 3px; border-radius: 6px; background: #0abb0a; }
.line em { position: absolute; left: 0; width: 30px; top: 8px; text-align: center; font: 700 7.500px/10px Roboto; color: #0a9d0a; }
.tray { margin-left: auto; display: flex; align-items: center; }
.tray svg { fill: none; stroke: #fff; stroke-width: 1.300; }
.tray .y1 { stroke: none; margin-right: 10px; }
.y2 { margin-right: 11px; }
.y3 { margin-right: 10px; }
.y4 { margin-right: 10px; }
.y5 { margin-right: 9px; }
.y6 { margin-right: 14px; }
.time { width: 74px; font: 400 15.500px/24px "Noto Sans", "Noto Sans CJK TC", sans-serif; color: #fff; text-align: center; display: flex; flex-direction: column; align-items: center; margin-right: 24px; }
.y7 { margin-right: 25px; }
.edgeline { width: 1px; height: 50px; background: #666; margin-right: 5px; }
</style>
